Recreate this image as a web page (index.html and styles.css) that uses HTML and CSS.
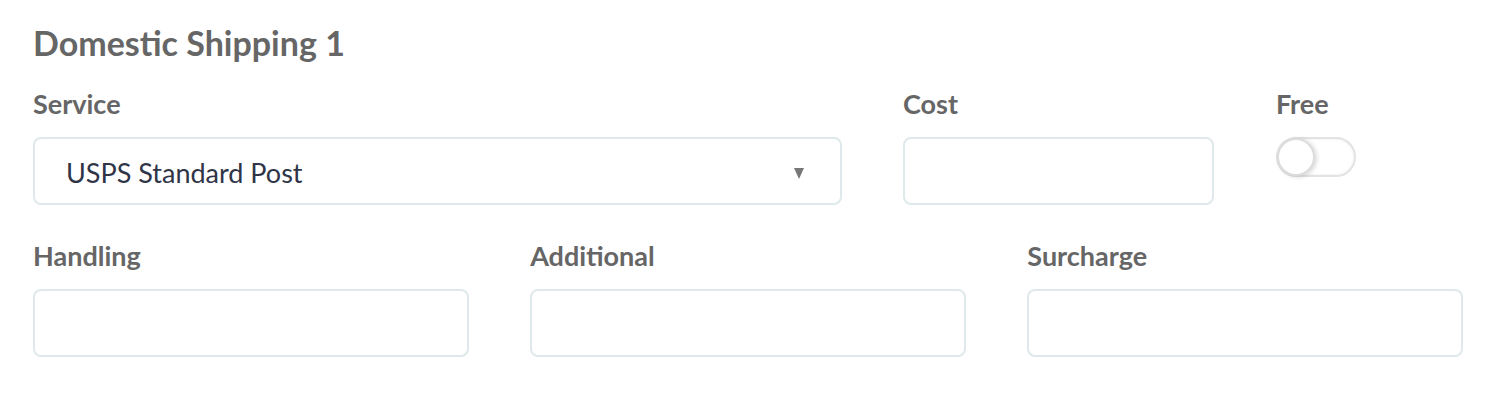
FILE: index.html
```html
<!DOCTYPE html>
<html lang="en">
<head>
<meta charset="utf-8">
<title>Domestic Shipping</title>
<link rel="stylesheet" href="styles.css">
</head>
<body>
<section class="panel">
  <h2 class="title">Domestic Shipping 1</h2>
  <div class="row row-first">
    <div class="field span-7">
      <label class="label">Service</label>
      <div class="select">
        <span class="select-text">USPS Standard Post</span>
        <span class="caret"></span>
      </div>
    </div>
    <div class="field span-3">
      <label class="label">Cost</label>
      <div class="input"></div>
    </div>
    <div class="field span-2">
      <label class="label">Free</label>
      <div class="toggle"><span class="knob"></span></div>
    </div>
  </div>
  <div class="row row-second">
    <div class="field span-4">
      <label class="label">Handling</label>
      <div class="input"></div>
    </div>
    <div class="field span-4">
      <label class="label">Additional</label>
      <div class="input"></div>
    </div>
    <div class="field span-4">
      <label class="label">Surcharge</label>
      <div class="input"></div>
    </div>
  </div>
</section>
</body>
</html>
```

FILE: styles.css
```css
* { box-sizing: border-box; }

body {
  margin: 0;
  background: #ffffff;
  font-family: Lato, "Open Sans", sans-serif;
}

.panel {
  width: 1510px;
  padding: 23px 47px 0 33px;
}

.title {
  margin: 0;
  font-size: 34px;
  line-height: 40px;
  font-weight: 700;
  color: #666666;
}

.row {
  display: grid;
  grid-template-columns: repeat(12, 1fr);
  column-gap: 61.5px;
}

.row-first { margin-top: 25px; }
.row-second { margin-top: 35px; }

.span-7 { grid-column: span 7; }
.span-4 { grid-column: span 4; }
.span-3 { grid-column: span 3; }
.span-2 { grid-column: span 2; }

.field {
  display: flex;
  flex-direction: column;
  align-items: flex-start;
}

.label {
  display: block;
  font-size: 27px;
  line-height: 32px;
  font-weight: 700;
  color: #666666;
  margin-bottom: 17px;
}

.select,
.input {
  width: 100%;
  height: 68px;
  border: 2px solid #dfe8ea;
  border-radius: 8px;
  background: #ffffff;
}

.select {
  display: flex;
  align-items: center;
  justify-content: space-between;
  padding: 0 36px 0 31px;
}

.select-text {
  font-size: 27px;
  color: #2f3447;
  padding-top: 2px;
}

.caret {
  width: 0;
  height: 0;
  border-left: 5.5px solid transparent;
  border-right: 5.5px solid transparent;
  border-top: 11px solid #777777;
  margin-top: 4px;
}

.toggle {
  position: relative;
  width: 80px;
  height: 40px;
  border: 2px solid #e3e3e3;
  border-radius: 20px;
  background: #ffffff;
  box-shadow: inset 0 0 3px rgba(0, 0, 0, 0.08);
}

.knob {
  position: absolute;
  left: -1px;
  top: -1px;
  width: 38px;
  height: 38px;
  border-radius: 50%;
  background: #ffffff;
  border: 2px solid #dcdcdc;
  box-shadow: 2px 1px 4px rgba(0, 0, 0, 0.15);
}
```
